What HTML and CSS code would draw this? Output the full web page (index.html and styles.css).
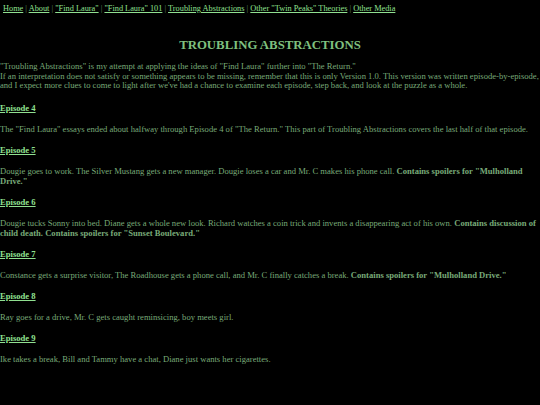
FILE: index.html
```html
<!DOCTYPE html>
<html>
<head>
<meta charset="utf-8">
<link rel="stylesheet" href="styles.css">
</head>
<body>
<nav class="nav"><a href="#">Home</a> | <a href="#">About</a> | <a href="#">"Find Laura"</a> | <a href="#">"Find Laura" 101</a> | <a href="#">Troubling Abstractions</a> | <a href="#">Other "Twin Peaks" Theories</a> | <a href="#">Other Media</a></nav>
<h1 class="title">TROUBLING ABSTRACTIONS</h1>
<p class="intro">"Troubling Abstractions" is my attempt at applying the ideas of "Find Laura" further into "The Return."<br>If an interpretation does not satisfy or something appears to be missing, remember that this is only Version 1.0. This version was written episode-by-episode, and I expect more clues to come to light after we've had a chance to examine each episode, step back, and look at the puzzle as a whole.</p>
<h2 class="ep"><a href="#">Episode 4</a></h2>
<p class="txt">The "Find Laura" essays ended about halfway through Episode 4 of "The Return." This part of Troubling Abstractions covers the last half of that episode.</p>
<h2 class="ep"><a href="#">Episode 5</a></h2>
<p class="txt">Dougie goes to work. The Silver Mustang gets a new manager. Dougie loses a car and Mr. C makes his phone call. <b>Contains spoilers for "Mulholland Drive."</b></p>
<h2 class="ep"><a href="#">Episode 6</a></h2>
<p class="txt">Dougie tucks Sonny into bed. Diane gets a whole new look. Richard watches a coin trick and invents a disappearing act of his own. <b>Contains discussion of child death. Contains spoilers for "Sunset Boulevard."</b></p>
<h2 class="ep"><a href="#">Episode 7</a></h2>
<p class="txt">Constance gets a surprise visitor, The Roadhouse gets a phone call, and Mr. C finally catches a break. <b>Contains spoilers for "Mulholland Drive."</b></p>
<h2 class="ep"><a href="#">Episode 8</a></h2>
<p class="txt">Ray goes for a drive, Mr. C gets caught reminsicing, boy meets girl.</p>
<h2 class="ep"><a href="#">Episode 9</a></h2>
<p class="txt">Ike takes a break, Bill and Tammy have a chat, Diane just wants her cigarettes.</p>
</body>
</html>
```
FILE: styles.css
```css
html { background: #000; }
body {
  margin: 3px 0 0 0;
  background: #000;
  color: #78aa78;
  font-family: "Liberation Serif", "Times New Roman", Times, serif;
  font-size: 8.6px;
  line-height: 9.7px;
}
a { color: #90e090; text-decoration: underline; }
.nav {
  font-size: 8.3px;
  line-height: 11px;
  padding-left: 3px;
  color: #5f8f5f;
}
.title {
  text-align: center;
  font-size: 12.8px;
  line-height: 15px;
  font-weight: bold;
  color: #7fc07f;
  margin: 24px 0 9px 0;
}
.intro { margin: 0 0 12px 0; }
.ep {
  font-size: 8.6px;
  line-height: 10px;
  font-weight: bold;
  margin: 0 0 11px 0;
}
.txt {
  line-height: 10px;
  margin: 0 0 11px 0;
}
```
